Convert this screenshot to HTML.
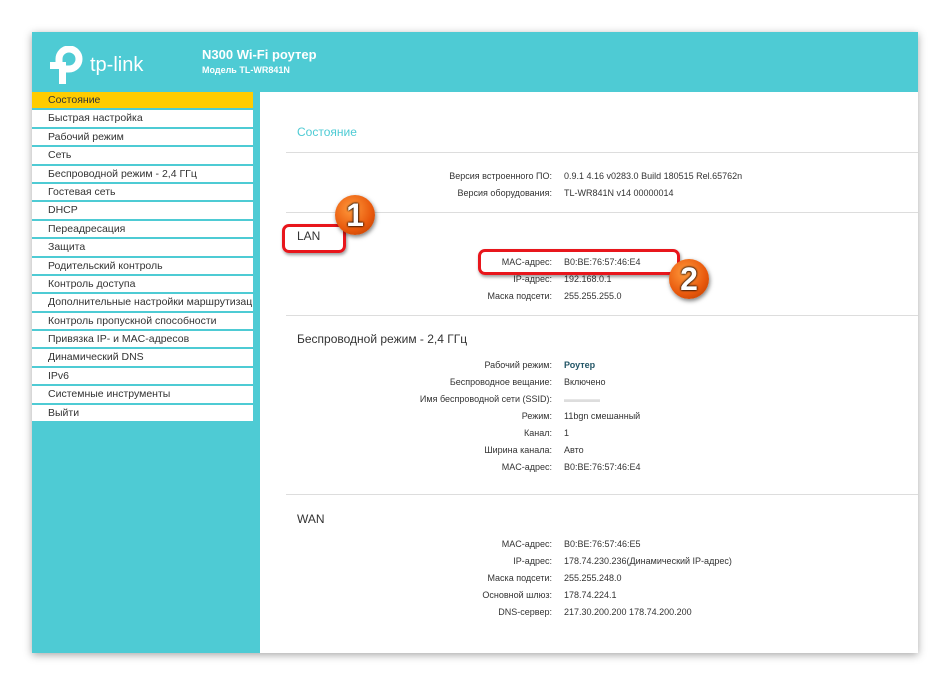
<!DOCTYPE html>
<html><head><meta charset="utf-8"><style>
body{margin:0;width:950px;height:685px;background:#fff;font-family:"Liberation Sans",Arial,sans-serif;position:relative;overflow:hidden}
#p{position:absolute;left:32px;top:32px;width:886px;height:621px;background:#4ecbd4;box-shadow:0 2px 8px rgba(0,0,0,.35)}
.t{position:absolute;color:#fff;font-weight:bold}
#menu{position:absolute;left:0;top:60px;width:221px}
#menu div{height:16.4px;margin-bottom:2px;background:#fff;font-size:10.5px;line-height:17px;padding-left:16px;color:#333;white-space:nowrap;overflow:hidden}
#menu div.a{background:#ffcc00}
#c{position:absolute;left:228px;top:60px;width:658px;height:561px;background:#fff}
.h{position:absolute;font-size:12px;color:#333}
.hr{position:absolute;left:26px;right:0;height:1px;background:#ddd}
.r{position:absolute;font-size:9px;color:#333;white-space:nowrap}
.l{position:absolute;right:366px;text-align:right}
.v{position:absolute;left:304px}
.badge{position:absolute;width:40px;height:40px;border-radius:50%;background:radial-gradient(circle at 40% 35%,#ff9a3c,#e8580c 60%,#b33a00);box-shadow:1px 2px 4px rgba(0,0,0,.5);color:#fff;font:bold 32px "Liberation Sans",sans-serif;text-align:center;line-height:40px;text-shadow:0 0 2px #000,0 0 2px #000}
.box{position:absolute;border:3px solid #e8161c;border-radius:7px;box-shadow:1px 2px 3px rgba(0,0,0,.4)}
</style></head><body>
<div id="p">
<svg style="position:absolute;left:17px;top:14px" width="38" height="38" viewBox="0 0 38 38"><path d="M10 19V13A10 10 0 1 1 20 23h-3" fill="none" stroke="#fff" stroke-width="7"/><rect x="1" y="16" width="16" height="7" fill="#fff"/><rect x="10" y="16" width="7" height="22" fill="#fff"/></svg>
<div class="t" style="left:58px;top:22px;font-size:20px;font-weight:normal">tp-link</div>
<div class="t" style="left:170px;top:15px;font-size:13px">N300 Wi-Fi роутер</div>
<div class="t" style="left:170px;top:33px;font-size:9px">Модель TL-WR841N</div>
<div id="menu">
<div class="a">Состояние</div><div>Быстрая настройка</div><div>Рабочий режим</div><div>Сеть</div><div>Беспроводной режим - 2,4 ГГц</div><div>Гостевая сеть</div><div>DHCP</div><div>Переадресация</div><div>Защита</div><div>Родительский контроль</div><div>Контроль доступа</div><div>Дополнительные настройки маршрутизации</div><div>Контроль пропускной способности</div><div>Привязка IP- и MAC-адресов</div><div>Динамический DNS</div><div>IPv6</div><div>Системные инструменты</div><div>Выйти</div>
</div>
<div id="c">
<div class="h" style="left:37px;top:33px;color:#4ecbd4">Состояние</div>
<div class="hr" style="top:60px"></div>
<div class="r" style="top:79px;width:658px"><span class="l">Версия встроенного ПО:</span><span class="v">0.9.1 4.16 v0283.0 Build 180515 Rel.65762n</span></div>
<div class="r" style="top:96px;width:658px"><span class="l">Версия оборудования:</span><span class="v">TL-WR841N v14 00000014</span></div>
<div class="hr" style="top:120px"></div>
<div class="h" style="left:37px;top:137px">LAN</div>
<div class="r" style="top:165px;width:658px"><span class="l">MAC-адрес:</span><span class="v">B0:BE:76:57:46:E4</span></div>
<div class="r" style="top:182px;width:658px"><span class="l">IP-адрес:</span><span class="v">192.168.0.1</span></div>
<div class="r" style="top:199px;width:658px"><span class="l">Маска подсети:</span><span class="v">255.255.255.0</span></div>
<div class="hr" style="top:223px"></div>
<div class="h" style="left:37px;top:240px">Беспроводной режим - 2,4 ГГц</div>
<div class="r" style="top:268px;width:658px"><span class="l">Рабочий режим:</span><span class="v" style="font-weight:bold;color:#256">Роутер</span></div>
<div class="r" style="top:285px;width:658px"><span class="l">Беспроводное вещание:</span><span class="v">Включено</span></div>
<div class="r" style="top:302px;width:658px"><span class="l">Имя беспроводной сети (SSID):</span><span class="v" style="color:#ddd">▬▬▬▬</span></div>
<div class="r" style="top:319px;width:658px"><span class="l">Режим:</span><span class="v">11bgn смешанный</span></div>
<div class="r" style="top:336px;width:658px"><span class="l">Канал:</span><span class="v">1</span></div>
<div class="r" style="top:353px;width:658px"><span class="l">Ширина канала:</span><span class="v">Авто</span></div>
<div class="r" style="top:370px;width:658px"><span class="l">MAC-адрес:</span><span class="v">B0:BE:76:57:46:E4</span></div>
<div class="hr" style="top:402px"></div>
<div class="h" style="left:37px;top:420px">WAN</div>
<div class="r" style="top:447px;width:658px"><span class="l">MAC-адрес:</span><span class="v">B0:BE:76:57:46:E5</span></div>
<div class="r" style="top:464px;width:658px"><span class="l">IP-адрес:</span><span class="v">178.74.230.236(Динамический IP-адрес)</span></div>
<div class="r" style="top:481px;width:658px"><span class="l">Маска подсети:</span><span class="v">255.255.248.0</span></div>
<div class="r" style="top:498px;width:658px"><span class="l">Основной шлюз:</span><span class="v">178.74.224.1</span></div>
<div class="r" style="top:515px;width:658px"><span class="l">DNS-сервер:</span><span class="v">217.30.200.200 178.74.200.200</span></div>
</div>
</div>
<div class="box" style="left:282px;top:224px;width:58px;height:23px"></div>
<div class="badge" style="left:335px;top:195px">1</div>
<div class="box" style="left:478px;top:249px;width:196px;height:20px"></div>
<div class="badge" style="left:669px;top:259px">2</div>
</body></html>
